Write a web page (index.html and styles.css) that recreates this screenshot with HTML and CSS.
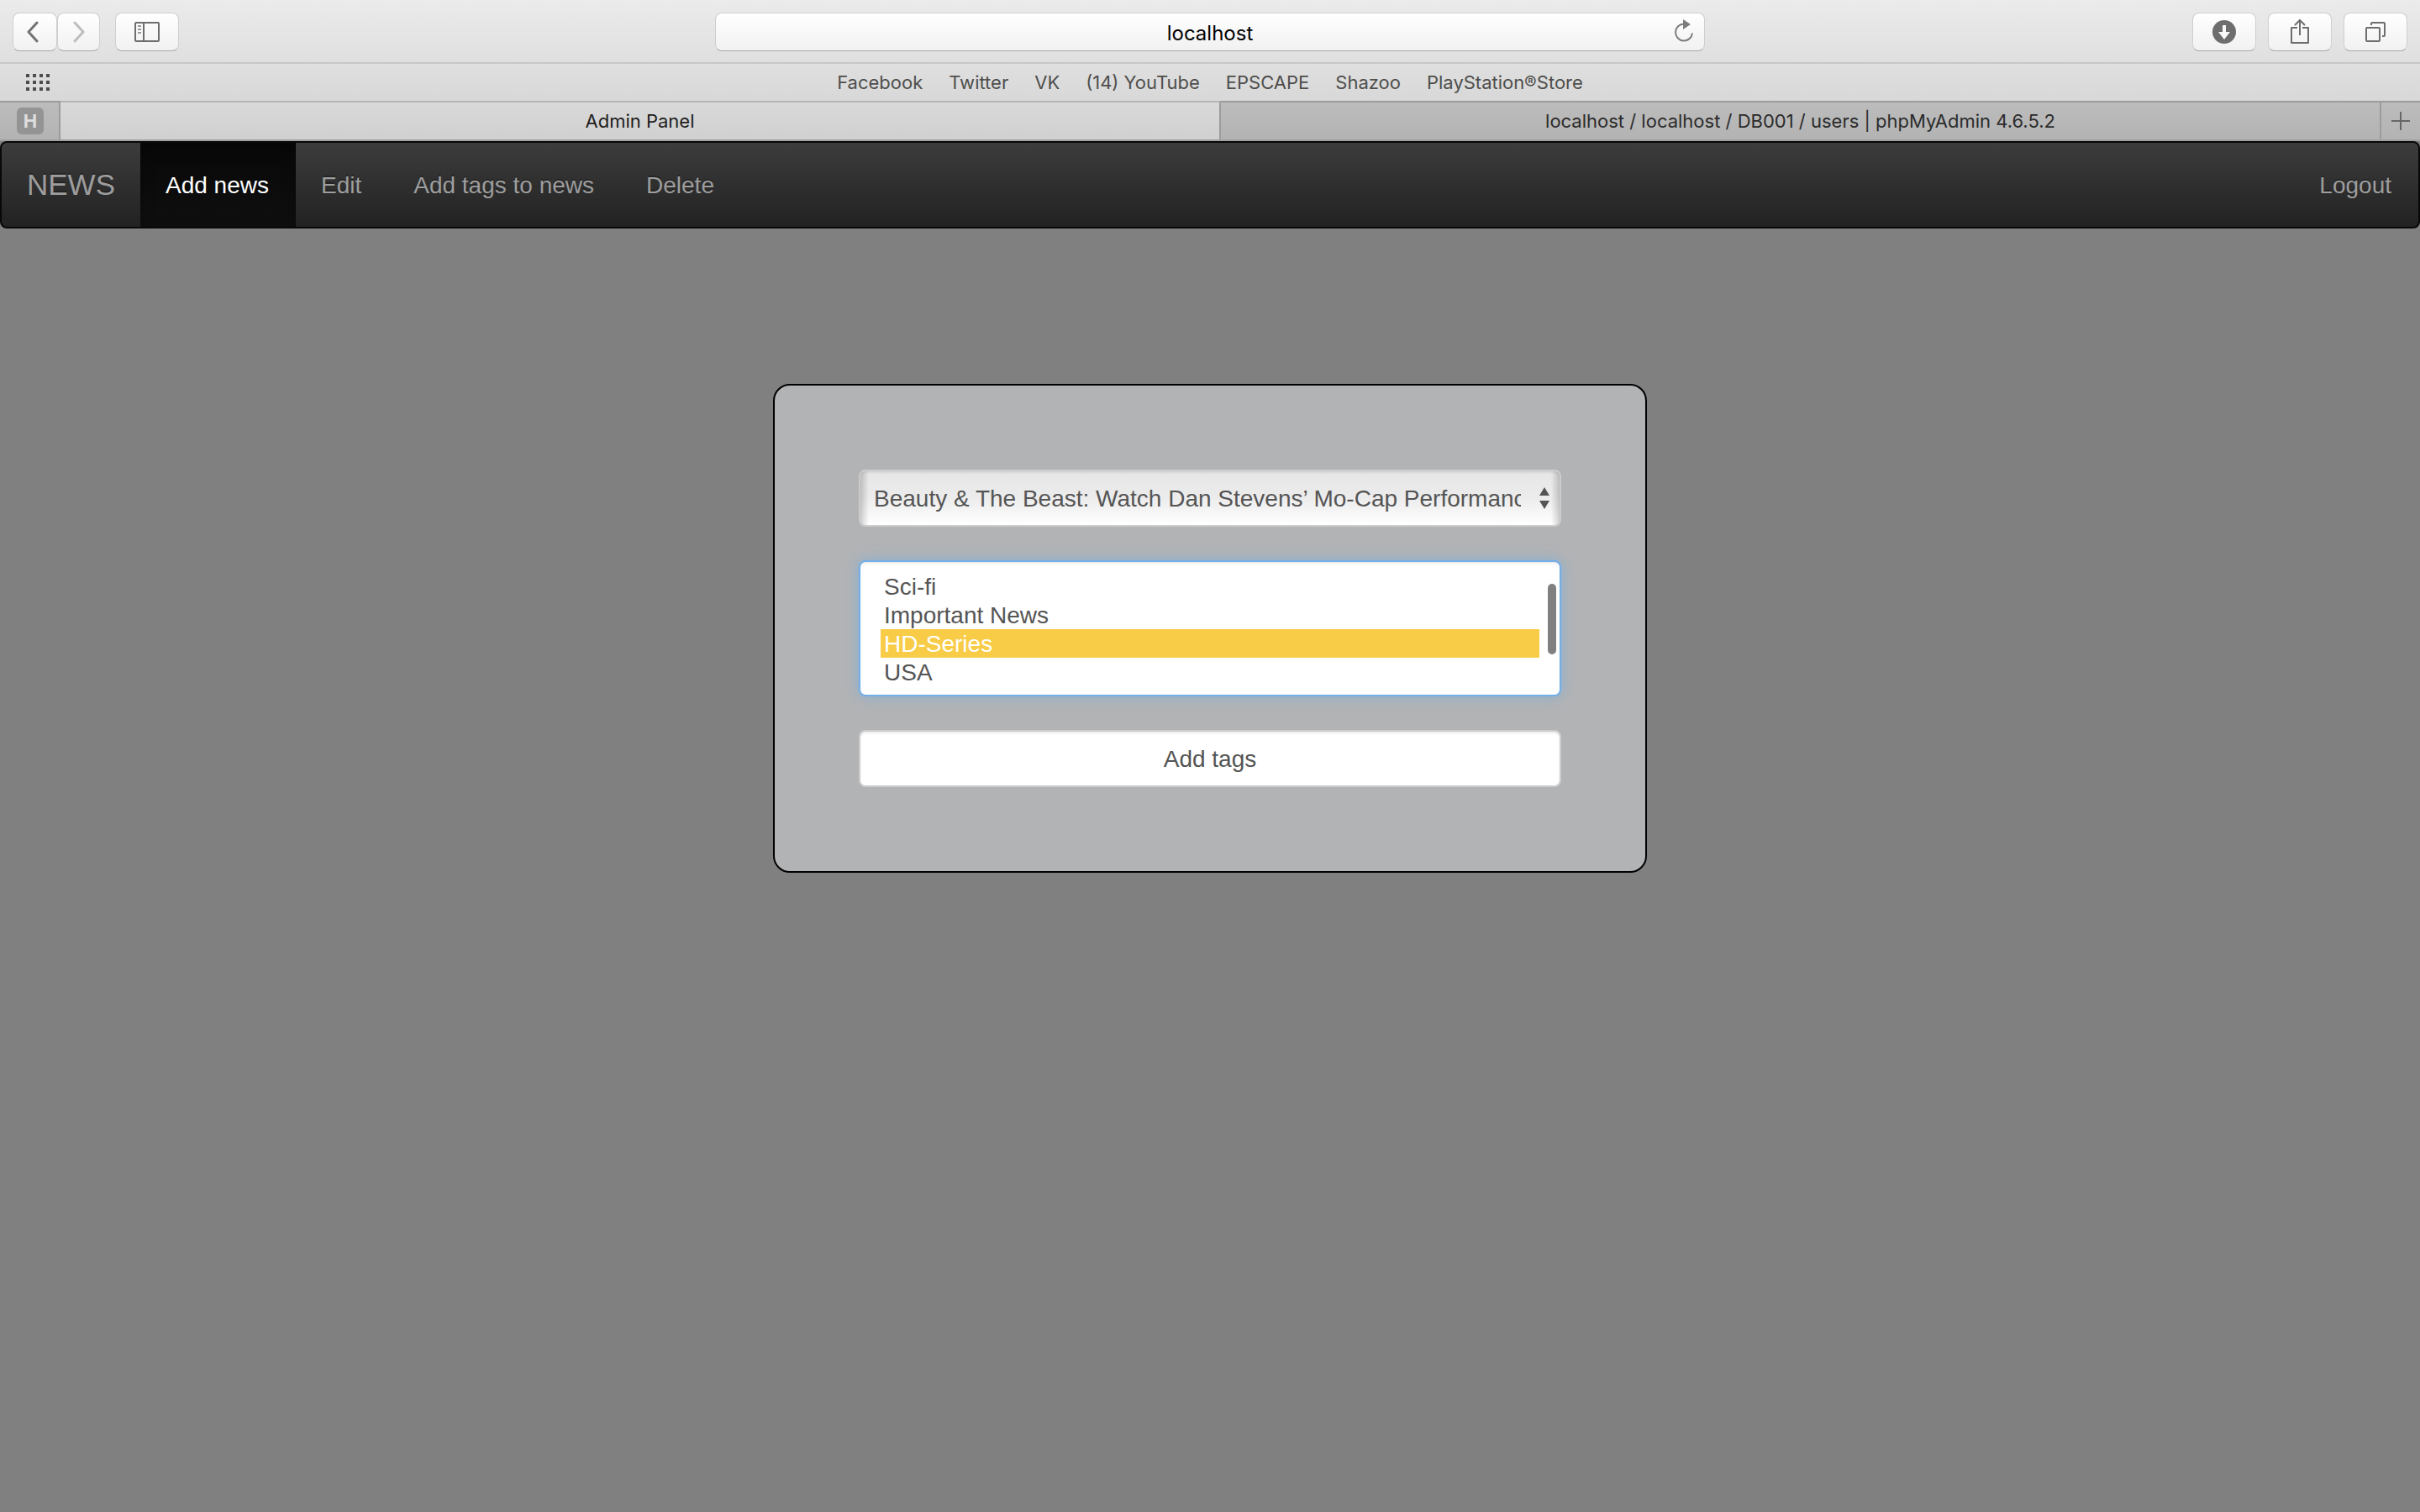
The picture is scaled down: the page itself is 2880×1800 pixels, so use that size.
FILE: index.html
```html
<!DOCTYPE html>
<html lang="en">
<head>
<meta charset="utf-8">
<title>Admin Panel</title>
<link rel="stylesheet" href="styles.css">
</head>
<body>
<header class="browser">
  <div class="toolbar">
    <div class="toolbar-group">
      <div class="history">
        <button class="tool tool-back" type="button" aria-label="Back">
          <svg width="14" height="26" viewBox="0 0 14 26" fill="none" stroke="#727272" stroke-width="3" stroke-linecap="round" stroke-linejoin="round"><path d="M12 2 2 13l10 11"/></svg>
        </button>
        <button class="tool tool-forward" type="button" aria-label="Forward">
          <svg width="14" height="26" viewBox="0 0 14 26" fill="none" stroke="#bdbdbd" stroke-width="3" stroke-linecap="round" stroke-linejoin="round"><path d="m2 2 10 11L2 24"/></svg>
        </button>
      </div>
      <button class="tool" type="button" aria-label="Sidebar">
        <svg width="30" height="24" viewBox="0 0 30 24" fill="none" stroke="#6e6e6e" stroke-width="2"><rect x="1" y="1" width="28" height="22" rx="1"/><path d="M11 1v22"/><path d="M4 5h4M4 9h4M4 13h4" stroke="#999"/></svg>
      </button>
    </div>
    <div class="address">
      <input class="address-input" type="text" value="localhost" aria-label="Address">
      <button class="reload" type="button" aria-label="Reload">
        <svg width="24" height="28" viewBox="0 0 24 28"><path d="M22 16.500A10 10 0 1 1 12 5.500" fill="none" stroke="#7c7c7c" stroke-width="2"/><path d="M11 0v12l9-6z" fill="#7c7c7c"/></svg>
      </button>
    </div>
    <div class="toolbar-group toolbar-end">
      <button class="tool" type="button" aria-label="Downloads">
        <svg width="28" height="28" viewBox="0 0 28 28"><circle cx="14" cy="14" r="14" fill="#6e6e6e"/><path d="M12 6h4v8h5l-7 9-7-9h5z" fill="#fafafa"/></svg>
      </button>
      <button class="tool" type="button" aria-label="Share">
        <svg class="icon-share" width="22" height="30" viewBox="0 0 22 30" fill="none" stroke="#6e6e6e" stroke-width="2"><path d="M8 11H1v18h20V11h-7" stroke-linejoin="round"/><path d="M11 20V2M5 8l6-6 6 6"/></svg>
      </button>
      <button class="tool" type="button" aria-label="Show all tabs">
        <svg width="24" height="24" viewBox="0 0 24 24" fill="none" stroke="#6e6e6e" stroke-width="2"><rect x="1" y="7" width="16" height="16" rx="1"/><path d="M7 4V2q0-1 1-1h14q1 0 1 1v14q0 1-1 1h-2"/></svg>
      </button>
    </div>
  </div>
  <nav class="favorites" aria-label="Favorites">
    <button class="grid-button" type="button" aria-label="Top sites">
      <svg width="28" height="20" viewBox="0 0 28 20" fill="none" stroke="#4c4c4c" stroke-width="4"><path d="M0 2h28M0 10h28M0 18h28" stroke-dasharray="4 4"/></svg>
    </button>
    <div class="favorites-links">
      <a href="#">Facebook</a>
      <a href="#">Twitter</a>
      <a href="#">VK</a>
      <a href="#">(14) YouTube</a>
      <a href="#">EPSCAPE</a>
      <a href="#">Shazoo</a>
      <a href="#">PlayStation®Store</a>
    </div>
  </nav>
  <div class="tabs">
    <a class="tab tab-pinned" href="#"><span class="favicon">H</span></a>
    <a class="tab tab-active" href="#">Admin Panel</a>
    <a class="tab" href="#">localhost / localhost / DB001 / users | phpMyAdmin 4.6.5.2</a>
    <button class="tab tab-new" type="button" aria-label="New tab">
      <svg width="22" height="22" viewBox="0 0 22 22" stroke="#666" stroke-width="2"><path d="M11 0v22M0 11h22"/></svg>
    </button>
  </div>
</header>

<nav class="navbar">
  <a class="brand" href="#">NEWS</a>
  <a class="nav-link active" href="#">Add news</a>
  <a class="nav-link" href="#">Edit</a>
  <a class="nav-link" href="#">Add tags to news</a>
  <a class="nav-link" href="#">Delete</a>
  <a class="nav-link nav-end" href="#">Logout</a>
</nav>

<main class="page">
  <form class="card">
    <div class="select-wrap">
      <select class="control news-select" aria-label="News">
        <option>Beauty &amp; The Beast: Watch Dan Stevens’ Mo-Cap Performance</option>
      </select>
      <svg class="select-arrows" width="12" height="26" viewBox="0 0 12 26" fill="#555"><path d="M6 0l6 10H0zM6 26l6-10H0z"/></svg>
    </div>
    <div class="select-wrap">
      <select class="control tag-list" multiple size="4" aria-label="Tags">
        <option>Sci-fi</option>
        <option>Important News</option>
        <option selected>HD-Series</option>
        <option>USA</option>
      </select>
      <span class="scroll-thumb"></span>
    </div>
    <button class="control submit" type="button">Add tags</button>
  </form>
</main>
</body>
</html>
```
FILE: styles.css
```css
* { box-sizing: border-box; }

body {
  margin: 0;
  background: #808080;
  font-family: "Liberation Sans", Arial, sans-serif;
  font-size: 28px;
  color: #555;
}

a { color: inherit; text-decoration: none; }
button, input, select { font: inherit; color: inherit; margin: 0; }
svg { display: block; }

/* Browser window */
.browser {
  font-family: Inter, sans-serif;
  font-size: 22px;
  background: linear-gradient(#ebebeb, #dfdfdf 76px, #d8d8d8 120px);
}

.toolbar {
  display: grid;
  grid-template-columns: 1fr minmax(0, 1178px) 1fr;
  align-items: center;
  padding: 15px 15px 13px;
  border-bottom: 2px solid #c8c8c8;
}

.toolbar-group { display: flex; gap: 18px; }
.toolbar-end { justify-content: flex-end; gap: 14px; }
.history { display: flex; }

.tool, .address-input {
  height: 46px;
  border: 1px solid #cfcfcf;
  border-bottom-color: #a8a8a8;
  border-radius: 8px;
  background: linear-gradient(#fff, #f1f1f1);
}

.tool {
  display: flex;
  align-items: center;
  justify-content: center;
  width: 76px;
  padding: 0;
}
.tool-back { width: 53px; padding-right: 6px; }
.tool-forward { width: 51px; }
.icon-share { margin-bottom: 3px; }

.address { position: relative; }
.address-input {
  display: block;
  width: 100%;
  padding: 2px 48px 0;
  font-size: 24px;
  color: #000;
  text-align: center;
}
.reload {
  position: absolute;
  top: 8px;
  right: 13px;
  padding: 0;
  border: 0;
  background: none;
}

.favorites {
  display: grid;
  grid-template-columns: 1fr auto 1fr;
  align-items: center;
  height: 44px;
  padding: 0 31px;
}
.grid-button { justify-self: start; padding: 0; border: 0; background: none; }
.favorites-links { display: flex; gap: 31px; color: #4e4e4c; }

.tabs {
  display: grid;
  grid-template-columns: 72px 1fr 1fr 46px;
  border-bottom: 2px solid #a0a0a0;
}
.tab {
  display: flex;
  align-items: center;
  justify-content: center;
  height: 46px;
  padding: 0;
  border: 0 solid #9c9c9c;
  border-width: 2px 2px 0 0;
  background: linear-gradient(#bcbcbc, #b3b3b3);
  color: #2b2b2b;
}
.tab-pinned { padding-left: 2px; }
.tab-active {
  border-top-color: #b5b5b5;
  background: linear-gradient(#d9d9d9, #d0d0d0);
  color: #1e1e1e;
}
.tab-new { border-right-width: 0; }
.favicon {
  width: 32px;
  border-radius: 6px;
  background: #949494;
  color: #dedede;
  font-weight: 700;
  line-height: 32px;
  text-align: center;
}

/* Site navigation */
.navbar {
  display: flex;
  border: 2px solid #080808;
  border-radius: 8px;
  background: linear-gradient(#3c3c3c, #222);
  color: #9d9d9d;
  line-height: 100px;
  text-shadow: 0 -2px 0 rgba(0, 0, 0, .25);
}
.brand { padding: 0 30px; font-size: 35px; }
.nav-link { padding: 2px 32px 0 30px; line-height: 98px; }
.nav-link.active {
  background: linear-gradient(#080808, #0f0f0f);
  box-shadow: inset 0 6px 18px rgba(0, 0, 0, .25);
  color: #fff;
}
.nav-end { margin-left: auto; }

/* Tag form */
.page { padding: 185px 32px; }
.card {
  display: flex;
  flex-direction: column;
  gap: 40px;
  max-width: 1040px;
  margin: 0 auto;
  padding: 100px;
  border: 2px solid #000;
  border-radius: 20px;
  background: #b2b3b5;
}
.select-wrap { position: relative; }
.control {
  display: block;
  width: 100%;
  border: 2px solid #ccc;
  border-radius: 8px;
  background: #fff;
  box-shadow: inset 0 2px 2px rgba(0, 0, 0, .075);
  outline: none;
}
.news-select {
  height: 68px;
  padding: 0 46px 0 16px;
  appearance: none;
  background:
    linear-gradient(90deg, rgba(0, 0, 0, .18), transparent 10px calc(100% - 10px), rgba(0, 0, 0, .18)),
    linear-gradient(#e6e6e6, #ececec 50%, #fff);
}
.select-arrows {
  position: absolute;
  top: 21px;
  right: 14px;
  pointer-events: none;
}
.tag-list {
  height: 162px;
  padding: 12px 24px 10px;
  overflow: hidden;
  border-color: #74aee8;
  box-shadow: inset 0 2px 2px rgba(0, 0, 0, .075), 0 0 16px rgba(102, 175, 233, .6);
}
.tag-list option {
  height: 34px;
  padding: 2px 4px 0;
  line-height: 32px;
}
.tag-list option:checked {
  background: #f8cc46 linear-gradient(#f8cc46, #f8cc46);
  color: #fff;
}
.scroll-thumb {
  position: absolute;
  top: 28px;
  right: 6px;
  width: 10px;
  height: 84px;
  border-radius: 5px;
  background: #808080;
}
.submit { height: 68px; padding: 2px 24px 0; }
```
